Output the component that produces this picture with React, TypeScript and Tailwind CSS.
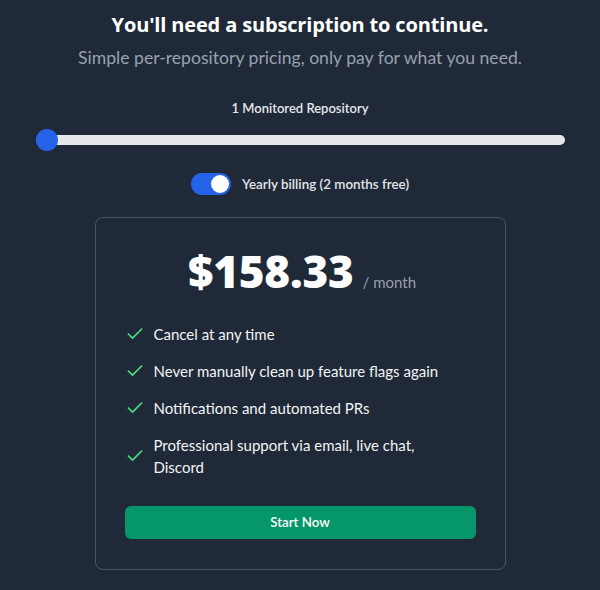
import { Check } from "lucide-react";

const features = [
    "Cancel at any time",
    "Never manually clean up feature flags again",
    "Notifications and automated PRs",
    "Professional support via email, live chat, Discord",
];

export default function App() {
    return (
        <div
            className="min-h-screen w-[600px] bg-[#1f2937] text-white flex flex-col items-center pt-[11px]"
            style={{ fontFamily: 'Lato, "Open Sans", sans-serif' }}
        >
            <h1 className="text-xl leading-7 font-bold text-white font-['Open_Sans'] tracking-[-0.15px]">
                You'll need a subscription to continue.
            </h1>
            <p className="mt-[5px] text-[17.6px] leading-7 text-gray-400">
                Simple per-repository pricing, only pay for what you need.
            </p>

            <div className="mt-[26px] text-[13px] leading-5 font-semibold text-gray-200">1 Monitored Repository</div>

            {/* slider */}
            <div className="mt-[11px] w-[529px] ml-[1px] h-[22px] relative flex items-center">
                <div className="h-2.5 w-full rounded-full bg-gray-200" />
                <div className="absolute left-0 top-0 w-[22px] h-[22px] rounded-full bg-[#2563eb]" />
            </div>

            {/* billing toggle */}
            <div className="mt-[22px] flex items-center gap-[11px]">
                <div className="w-10 h-[22px] rounded-full bg-[#2563eb] p-[2px] flex justify-end">
                    <div className="w-[18px] h-[18px] rounded-full bg-white" />
                </div>
                <span className="text-[13.4px] leading-5 font-semibold text-gray-200">Yearly billing (2 months free)</span>
            </div>

            {/* plan card */}
            <div className="mt-[22px] w-[411px] rounded-lg border border-gray-600 px-[29px] pt-[29px] pb-[30px] flex flex-col">
                <div className="flex items-baseline justify-center gap-[9px] pl-1">
                    <span className="text-[44px] leading-[48px] font-extrabold text-white font-['Open_Sans'] tracking-[-0.2px]">
                        $158.33
                    </span>
                    <span className="text-[15px] text-gray-400">/ month</span>
                </div>

                <ul className="mt-[28px] flex flex-col gap-[15px]">
                    {features.map((f) => (
                        <li key={f} className="flex items-center gap-[9px]">
                            <Check size={20} strokeWidth={2} className="shrink-0 text-[#4ade80]" />
                            <span className="max-w-[290px] text-[15px] leading-[22px] text-gray-100">{f}</span>
                        </li>
                    ))}
                </ul>

                <button className="mt-[28px] h-[33px] w-full rounded-md bg-[#059669] text-[13.3px] font-semibold text-white">
                    Start Now
                </button>
            </div>
        </div>
    );
}
